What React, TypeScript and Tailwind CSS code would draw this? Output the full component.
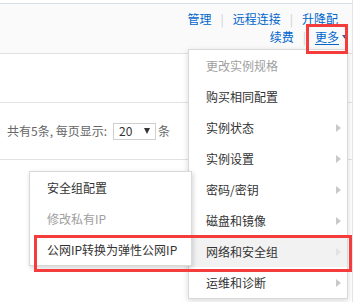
import React from 'react';

const font = { fontFamily: '"Noto Sans CJK SC", "Liberation Sans", sans-serif' };

interface MenuItem {
  label: string;
  disabled?: boolean;
  arrow?: boolean;
  active?: boolean;
}

const mainItems: MenuItem[] = [
  { label: '更改实例规格', disabled: true },
  { label: '购买相同配置' },
  { label: '实例状态', arrow: true },
  { label: '实例设置', arrow: true },
  { label: '密码/密钥', arrow: true },
  { label: '磁盘和镜像', arrow: true },
  { label: '网络和安全组', arrow: true, active: true },
  { label: '运维和诊断', arrow: true },
];

const subItems: MenuItem[] = [
  { label: '安全组配置' },
  { label: '修改私有IP', disabled: true },
  { label: '公网IP转换为弹性公网IP' },
];

const Sep = () => <span className="mx-[9px] text-[#cfcfcf]">|</span>;

const Row: React.FC<{ item: MenuItem }> = ({ item }) => (
  <div
    className={
      'flex h-[31px] items-center justify-between pl-[17px] pr-[6px] text-[12px] ' +
      (item.active ? 'bg-[#f2f2f2] ' : '') +
      (item.disabled ? 'text-[#a0a0a0]' : 'text-[#333]')
    }
  >
    <span>{item.label}</span>
    {item.arrow && (
      <span
        className={
          'h-0 w-0 border-y-[4.5px] border-l-[5px] border-y-transparent ' +
          (item.active ? 'border-l-[#e2e2e2]' : 'border-l-[#c9c9c9]')
        }
      />
    )}
  </div>
);

export default function App() {
  return (
    <div className="relative h-[302px] w-[359px] overflow-hidden bg-white" style={font}>
      <div className="h-full w-[353px] border-r border-[#e3e6e8] pt-[3px]">
        <div className="h-[51px] border-y border-t-[#d6e0e6] border-b-[#e2e2e2] bg-[#fafafa] pt-[6px] text-[12px] text-[#0066cc]">
          <div className="flex h-[18px] items-center justify-end pr-[14px] leading-[18px]">
            <span>管理</span>
            <Sep />
            <span>远程连接</span>
            <Sep />
            <span>升降配</span>
          </div>
          <div className="flex h-[18px] items-center justify-end pr-[4px] leading-[18px]">
            <span>续费</span>
            <Sep />
            <span className="underline underline-offset-2">更多</span>
            <span className="ml-[3px] h-0 w-0 border-x-[3px] border-t-[4px] border-x-transparent border-t-[#2f5f9e]" />
          </div>
        </div>
        <div className="h-[49px] border-b border-[#e2e2e2]" />
        <div className="flex h-[57px] items-center border-b border-[#e2e2e2] pl-[7px] text-[12px] text-[#666]">
          <span>共有5条, 每页显示:</span>
          <div className="ml-[6px] flex h-[17px] w-[43px] items-center justify-between border border-[#cfcfcf] pl-[5px] pr-[5px] text-[#333]">
            <span>20</span>
            <span className="h-0 w-0 border-x-[3.5px] border-t-[6px] border-x-transparent border-t-[#333]" />
          </div>
          <span className="ml-[2px]">条</span>
        </div>
      </div>

      <div className="absolute left-[188px] top-[49px] w-[160px] border border-[#d9d9d9] bg-white shadow-[0_2px_6px_rgba(0,0,0,0.15)]">
        {mainItems.map((item) => (
          <Row key={item.label} item={item} />
        ))}
      </div>

      <div className="absolute left-[29px] top-[171px] z-10 w-[163px] border border-[#d9d9d9] bg-white shadow-[1px_2px_5px_rgba(0,0,0,0.18)]">
        {subItems.map((item) => (
          <Row key={item.label} item={item} />
        ))}
      </div>

      <div className="absolute left-[306px] top-[24px] z-20 h-[30px] w-[42px] border-[3px] border-[#f43c3c]" />
      <div className="absolute left-[34px] top-[235px] z-20 h-[37px] w-[318px] border-[3px] border-[#f43c3c]" />
    </div>
  );
}
